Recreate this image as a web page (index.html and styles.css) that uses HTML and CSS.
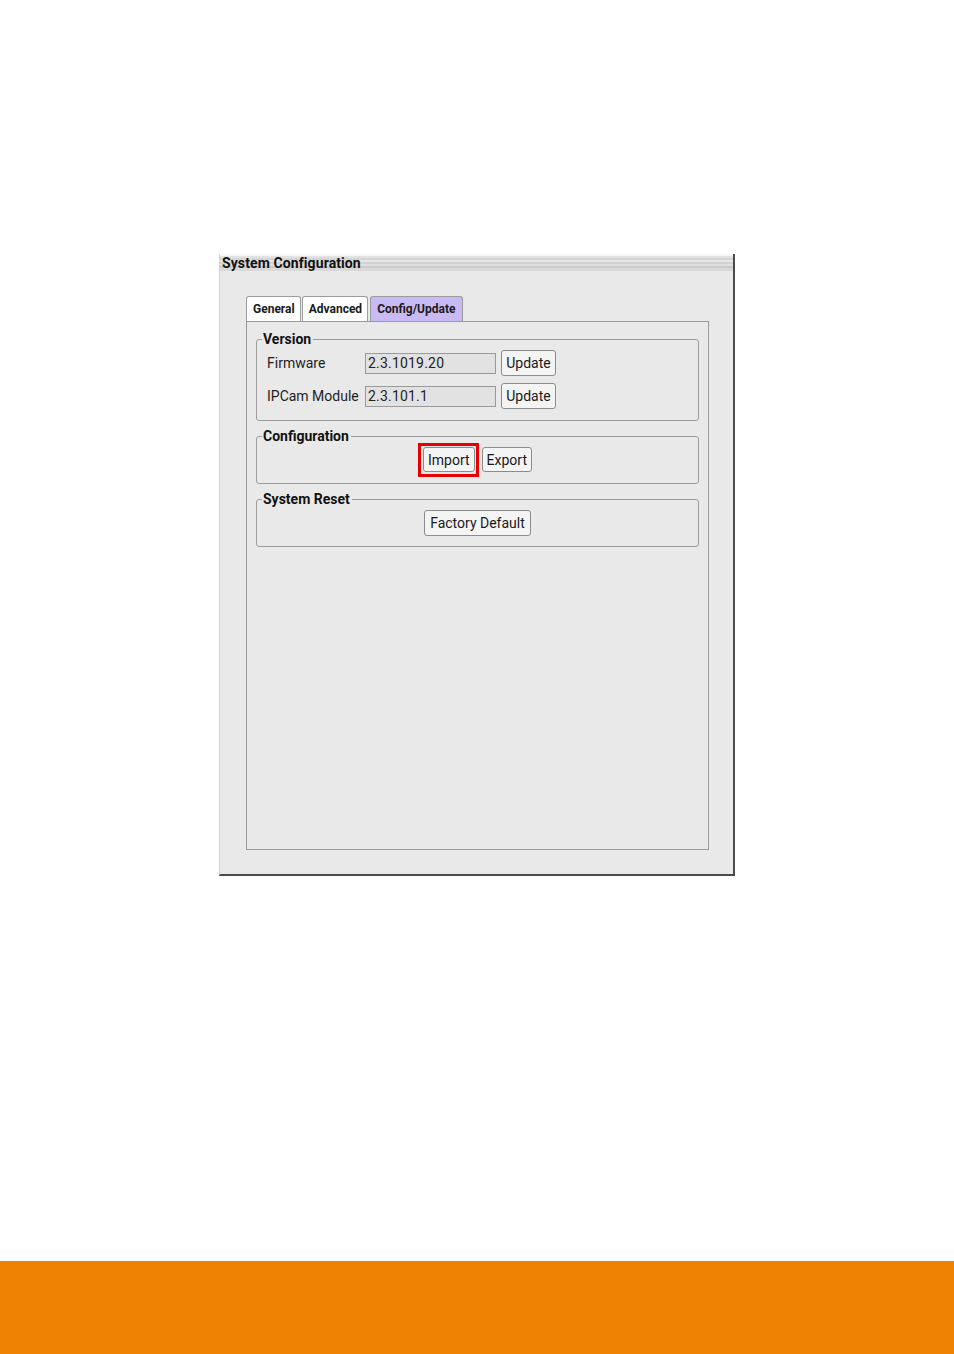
FILE: index.html
```html
<!DOCTYPE html>
<html lang="en">
<head>
<meta charset="utf-8">
<title>System Configuration</title>
<link rel="stylesheet" href="styles.css">
</head>
<body>
<main class="page">
  <section class="window">
    <header class="titlebar"><span class="title">System Configuration</span></header>
    <div class="window-body">
      <nav class="tabs">
        <div class="tab">General</div>
        <div class="tab">Advanced</div>
        <div class="tab tab-active">Config/Update</div>
      </nav>
      <div class="tab-panel">
        <fieldset class="group group-version">
          <legend>Version</legend>
          <div class="version-grid">
            <label class="field-label">Firmware</label>
            <input class="field-input" type="text" value="2.3.1019.20" readonly>
            <button class="btn btn-update">Update</button>
            <label class="field-label">IPCam Module</label>
            <input class="field-input" type="text" value="2.3.101.1" readonly>
            <button class="btn btn-update">Update</button>
          </div>
        </fieldset>
        <fieldset class="group group-config">
          <legend>Configuration</legend>
          <div class="btn-row">
            <button class="btn btn-small btn-highlight">Import</button>
            <button class="btn btn-small">Export</button>
          </div>
        </fieldset>
        <fieldset class="group group-reset">
          <legend>System Reset</legend>
          <div class="btn-row">
            <button class="btn btn-reset">Factory Default</button>
          </div>
        </fieldset>
      </div>
    </div>
  </section>
</main>
<footer class="footer"></footer>
</body>
</html>
```

FILE: styles.css
```css
* { box-sizing: border-box; }

html, body {
  margin: 0;
  padding: 0;
  background: #ffffff;
  font-family: Roboto, "Liberation Sans", Arial, sans-serif;
  color: #1a1a1a;
}

.page {
  height: 1261px;
  padding: 254px 0 0 219px;
}

.window {
  width: 516px;
  height: 622px;
  background: #e9e9e9;
  border-left: 1px solid #d6d6d6;
  border-right: 2px solid #4a4a4a;
  border-bottom: 2px solid #4a4a4a;
  display: flex;
  flex-direction: column;
}

.titlebar {
  height: 17px;
  display: flex;
  align-items: center;
  padding-left: 2px;
  background: linear-gradient(to bottom,
    #f6f6f6 0px, #f6f6f6 2px,
    #e2e2e2 2px, #e2e2e2 4px,
    #d4d4d4 4px, #d4d4d4 6px,
    #e6e6e6 6px, #e6e6e6 8px,
    #d2d2d2 8px, #d2d2d2 10px,
    #e0e0e0 10px, #e0e0e0 12px,
    #cacaca 12px, #cacaca 14px,
    #d9d9d9 14px, #d9d9d9 17px);
}

.title {
  font-weight: 700;
  font-size: 14px;
  line-height: 17px;
  padding-top: 1px;
  letter-spacing: 0.1px;
  color: #111;
}

.window-body {
  flex: 1;
  display: flex;
  flex-direction: column;
  padding: 25px 24px 24px 26px;
}

.tabs {
  display: flex;
  gap: 1px;
  height: 25px;
  align-items: flex-end;
}

.tab {
  height: 25px;
  padding: 0 5px 0 6px;
  display: flex;
  align-items: center;
  font-size: 12px;
  font-weight: 700;
  color: #1a1a1a;
  background: #ffffff;
  border: 1px solid #9c9c9c;
  border-bottom: none;
  border-radius: 3px 3px 0 0;
}

.tab-active {
  margin-left: 1px;
  padding: 0 7px 0 6px;
  background: #c9b9f4;
}

.tab-panel {
  flex: 1;
  border: 1px solid #9a9a9a;
  background: #e9e9e9;
  padding: 9px 9px 0 9px;
  display: flex;
  flex-direction: column;
  gap: 7px;
}

.group {
  margin: 0;
  padding: 2px 10px 11px 10px;
  border: 1px solid #9c9c9c;
  border-radius: 3px;
  min-width: 0;
}

.group-reset {
  padding-bottom: 10px;
}

.group legend {
  font-size: 14px;
  font-weight: 700;
  line-height: 17px;
  padding: 0 2px 0 1px;
  margin-left: -5px;
  color: #111;
}

.version-grid {
  display: grid;
  grid-template-columns: 93px 131px 55px;
  column-gap: 5px;
  row-gap: 7px;
  align-items: center;
}

.field-label {
  font-size: 14px;
  color: #1e1e1e;
}

.field-input {
  width: 131px;
  height: 21px;
  margin: 0;
  padding: 0 2px;
  font-family: inherit;
  font-size: 14px;
  letter-spacing: 0.2px;
  color: #222;
  background: #e2e2e2;
  border: 1px solid #9a9a9a;
  border-radius: 0;
  outline: none;
}

.btn {
  position: relative;
  margin: 0;
  height: 26px;
  padding: 0 4px;
  font-family: inherit;
  font-size: 14px;
  color: #1a1a1a;
  background: #f4f4f4;
  border: 1px solid #8c8c8c;
  border-radius: 3px;
}

.btn-small {
  height: 25px;
  padding: 0 4px;
}

.btn-reset {
  padding: 0 5px;
}

.btn-highlight::after {
  content: "";
  position: absolute;
  top: -5px;
  left: -6px;
  right: -5px;
  bottom: -6px;
  border: 3px solid #e60000;
  pointer-events: none;
}

.btn-row {
  display: flex;
  justify-content: center;
  gap: 7px;
}

.footer {
  height: 93px;
  background: #ef8200;
}
```
